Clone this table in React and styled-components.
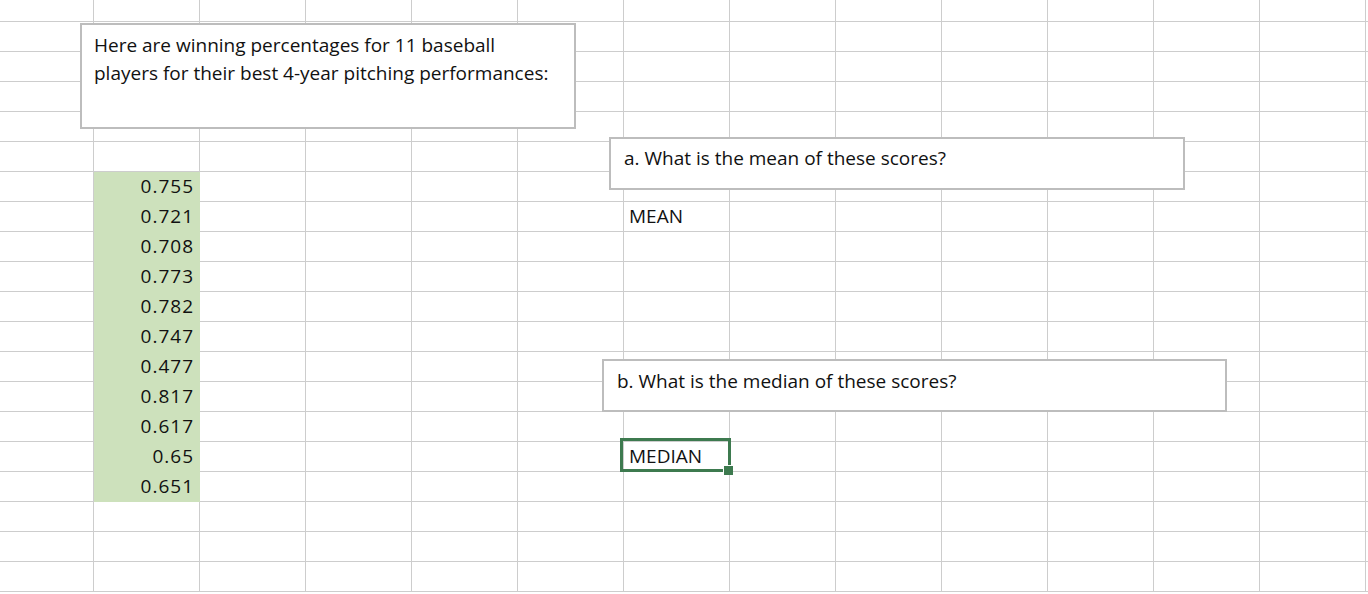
import React from "react";
import styled, { css, createGlobalStyle } from "styled-components";

const GlobalStyle = createGlobalStyle`
  html, body {
    margin: 0;
    padding: 0;
    background: #ffffff;
  }
  body {
    font-family: "Open Sans", Lato, sans-serif;
    color: #111;
  }
`;

const COLS = 14;
const ROWS = 20;
const LINE = "#cdcdcd";
const SELECT = "#3d7a4f";

// sheet surface
const Sheet = styled.div`
  position: relative;
  width: 1368px;
  height: 594px;
  overflow: hidden;
`;

const Grid = styled.div`
  display: grid;
  grid-template-columns: 94px repeat(12, 106px) 1fr;
  grid-template-rows: 22px repeat(19, 30px);
`;

const Cell = styled.div`
  position: relative;
  box-sizing: border-box;
  border-right: 1px solid ${(p) => (p.$fill ? "#cde1bc" : LINE)};
  border-bottom: 1px solid ${(p) => (p.$fill ? "#cde1bc" : LINE)};
  background: ${(p) => (p.$fill ? "#cde1bc" : "transparent")};
  display: flex;
  align-items: center;
  justify-content: ${(p) => (p.$num ? "flex-end" : "flex-start")};
  padding: ${(p) => (p.$num ? "0 5px 2px 0" : "0 0 2px 5px")};
  font-size: 19px;
  letter-spacing: ${(p) => (p.$num ? "1px" : "0")};
  white-space: nowrap;

  ${(p) =>
    p.$selected &&
    css`
      z-index: 1;
      &::before {
        content: "";
        position: absolute;
        left: -4px;
        top: -4px;
        right: -2px;
        bottom: -1px;
        border: 3px solid ${SELECT};
        pointer-events: none;
      }
      &::after {
        content: "";
        position: absolute;
        right: -4px;
        bottom: -4px;
        width: 9px;
        height: 9px;
        background: ${SELECT};
        border-left: 1px solid #fff;
        border-top: 1px solid #fff;
      }
    `}
`;

// floating text boxes over the sheet
const TextBox = styled.div`
  position: absolute;
  z-index: 2;
  box-sizing: border-box;
  background: #fff;
  border: 2px solid #bdbdbd;
  font-size: 19px;
  line-height: 28px;
  padding: ${(p) => p.$pad};
  white-space: nowrap;
`;

const values = [
  "0.755", "0.721", "0.708", "0.773", "0.782", "0.747",
  "0.477", "0.817", "0.617", "0.65", "0.651",
];

function cellContent(r, c) {
  if (c === 1 && r >= 6 && r <= 16) return { text: values[r - 6], num: true, fill: true };
  if (c === 6 && r === 7) return { text: "MEAN" };
  if (c === 6 && r === 15) return { text: "MEDIAN", selected: true };
  return null;
}

export default function App() {
  const cells = [];
  for (let r = 0; r < ROWS; r++) {
    for (let c = 0; c < COLS; c++) {
      const info = cellContent(r, c);
      cells.push(
        <Cell
          key={`${r}-${c}`}
          $num={info?.num}
          $fill={info?.fill}
          $selected={info?.selected}
        >
          {info?.text}
        </Cell>
      );
    }
  }

  return (
    <>
      <GlobalStyle />
      <Sheet>
        <Grid>{cells}</Grid>

        <TextBox
          style={{ left: 80, top: 23, width: 496, height: 106 }}
          $pad="6px 0 0 12px"
        >
          Here are winning percentages for 11 baseball
          <br />
          players for their best 4-year pitching performances:
        </TextBox>

        <TextBox
          style={{ left: 609, top: 137, width: 576, height: 53 }}
          $pad="5px 0 0 13px"
        >
          a. What is the mean of these scores?
        </TextBox>

        <TextBox
          style={{ left: 602, top: 359, width: 625, height: 53 }}
          $pad="6px 0 0 13px"
        >
          b. What is the median of these scores?
        </TextBox>
      </Sheet>
    </>
  );
}
